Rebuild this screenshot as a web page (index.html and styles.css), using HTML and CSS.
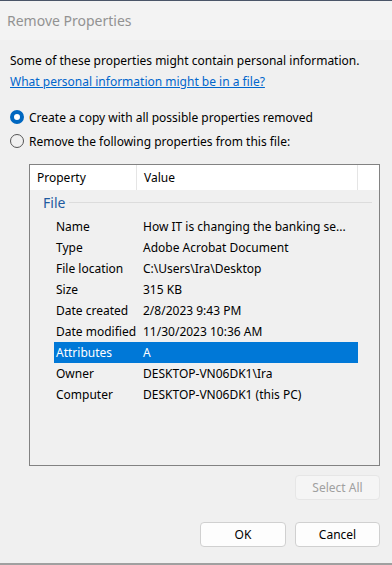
FILE: index.html
```html
<!DOCTYPE html>
<html lang="en">
<head>
  <meta charset="UTF-8" />
  <meta name="viewport" content="width=device-width, initial-scale=1.0"/>
  <title>Remove Properties</title>
  <link rel="stylesheet" href="styles.css">
</head>
<body>
<div class="dialog">
  <div class="titlebar">Remove Properties</div>

  <div class="content">
    <p class="intro">Some of these properties might contain personal information.</p>
    <a class="help-link" href="#">What personal information might be in a file?</a>

    <div class="options">
      <label class="radio-row">
        <span class="radio checked"></span>
        <span>Create a copy with all possible properties removed</span>
      </label>
      <label class="radio-row">
        <span class="radio"></span>
        <span>Remove the following properties from this file:</span>
      </label>
    </div>

    <div class="list-box">
      <div class="list-header">
        <div class="col col-prop">Property</div>
        <div class="col col-value">Value</div>
        <div class="col col-extra"></div>
      </div>

      <div class="group">
        <span class="group-title">File</span>
        <span class="group-line"></span>
      </div>

      <div class="rows">
        <div class="row"><span class="cell-label">Name</span><span class="cell-value">How IT is changing the banking se...</span></div>
        <div class="row"><span class="cell-label">Type</span><span class="cell-value">Adobe Acrobat Document</span></div>
        <div class="row"><span class="cell-label">File location</span><span class="cell-value">C:\Users\Ira\Desktop</span></div>
        <div class="row"><span class="cell-label">Size</span><span class="cell-value">315 KB</span></div>
        <div class="row"><span class="cell-label">Date created</span><span class="cell-value">2/8/2023 9:43 PM</span></div>
        <div class="row"><span class="cell-label">Date modified</span><span class="cell-value">11/30/2023 10:36 AM</span></div>
        <div class="row selected"><span class="cell-label">Attributes</span><span class="cell-value">A</span></div>
        <div class="row"><span class="cell-label">Owner</span><span class="cell-value">DESKTOP-VN06DK1\Ira</span></div>
        <div class="row"><span class="cell-label">Computer</span><span class="cell-value">DESKTOP-VN06DK1 (this PC)</span></div>
      </div>
    </div>

    <div class="select-all-row">
      <button class="btn btn-disabled" disabled>Select All</button>
    </div>

    <div class="footer">
      <button class="btn btn-ok">OK</button>
      <button class="btn">Cancel</button>
    </div>
  </div>
</div>
</body>
</html>
```

FILE: styles.css
```css
body {
  margin: 0;
  background: #f0f0f0;
  font-family: 'Segoe UI', 'Noto Sans', sans-serif;
  font-size: 12px;
  color: #000;
}

.dialog {
  width: 392px;
  height: 565px;
  box-sizing: border-box;
  border-top: 1px solid #4a5568;
  border-bottom: 2px solid #a0a0a0;
  background: #f0f0f0;
  overflow: hidden;
}

.titlebar {
  height: 39px;
  padding-left: 7px;
  display: flex;
  align-items: center;
  font-size: 14px;
  color: #929292;
  background: #f3f3f3;
}

.content {
  padding: 10px 12px 0 10px;
}

.intro {
  margin: 0;
  line-height: 21px;
}

.help-link {
  display: block;
  line-height: 21px;
  color: #0066cc;
  text-decoration: underline;
}

.options {
  margin-top: 13px;
}

.radio-row {
  display: flex;
  align-items: center;
  height: 24px;
  gap: 5px;
}

.radio {
  width: 14px;
  height: 14px;
  box-sizing: border-box;
  border-radius: 50%;
  border: 1px solid #555;
  background: #f0f0f0;
}

.radio.checked {
  border: 4px solid #0067c0;
  background: #fff;
}

.list-box {
  margin: 11px 0 0 19px;
  height: 302px;
  box-sizing: border-box;
  border: 1px solid #828282;
  background: #f0f0f0;
}

.list-header {
  display: flex;
  height: 25px;
  background: #fff;
}

.col {
  display: flex;
  align-items: center;
  padding-left: 7px;
  box-sizing: border-box;
  border-right: 1px solid #e5e5e5;
}

.col-prop {
  width: 107px;
}

.col-value {
  width: 221px;
}

.col-extra {
  flex: 1;
  border-right: none;
}

.group {
  display: flex;
  align-items: center;
  height: 25px;
  padding: 0 7px 0 13px;
  gap: 4px;
}

.group-title {
  color: #1e5aa0;
  font-size: 14px;
}

.group-line {
  flex: 1;
  height: 1px;
  background: #dcdcdc;
}

.rows {
  padding: 1px 21px 0 24px;
}

.row {
  display: flex;
  height: 21px;
  align-items: center;
}

.row.selected {
  background: #0078d7;
  color: #fff;
}

.cell-label {
  width: 87px;
  padding-left: 2px;
}

.select-all-row {
  display: flex;
  justify-content: flex-end;
  margin-top: 9px;
}

.btn {
  width: 85px;
  height: 25px;
  font-family: inherit;
  font-size: 12px;
  background: #fdfdfd;
  border: 1px solid #d0d0d0;
  border-radius: 4px;
  color: #000;
  padding: 0;
}

.btn-ok {
  width: 86px;
}

.btn-disabled {
  background: #f5f5f5;
  border-color: #e6e6e6;
  color: #a0a0a0;
}

.footer {
  display: flex;
  justify-content: flex-end;
  gap: 9px;
  margin-top: 22px;
}
```
